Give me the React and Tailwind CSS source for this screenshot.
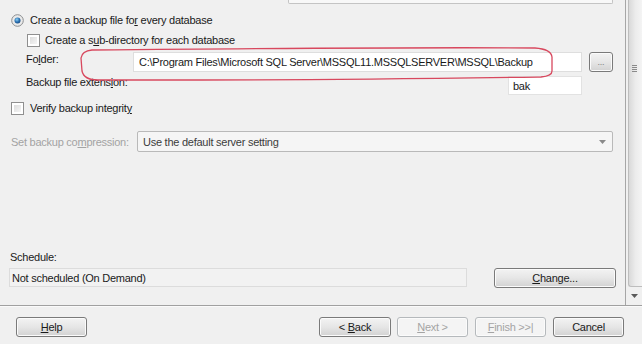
import React from 'react';

// Win7-style push button
function Button({ children, width = 'w-[71px]', disabled = false, className = '' }) {
  return (
    <div
      className={
        'h-[20px] flex items-center justify-center rounded-[3px] border shadow-[inset_0_0_0_1px_#fbfbfb] ' +
        width +
        ' ' +
        className +
        (disabled
          ? ' border-[#b5b9bc] bg-[#f4f4f4] text-[#a4a4a4]'
          : ' border-[#7a7a7a] bg-linear-to-b from-[#f3f3f3] via-[#e6e6e6] to-[#d2d2d2] text-[#1a1a1a]')
      }
    >
      {children}
    </div>
  );
}

function Checkbox() {
  return (
    <div className="w-[13px] h-[13px] shrink-0 border border-[#8f8f8f] bg-white p-[2px]">
      <div className="w-full h-full bg-linear-to-br from-[#dcdcdc] to-[#f6f6f6]" />
    </div>
  );
}

function Radio() {
  return (
    <svg width="13" height="13" viewBox="0 0 13 13" className="shrink-0">
      <defs>
        <radialGradient id="dot" cx="0.4" cy="0.35" r="0.7">
          <stop offset="0" stopColor="#8ad0f5" />
          <stop offset="0.6" stopColor="#2a6fb0" />
          <stop offset="1" stopColor="#1b4a80" />
        </radialGradient>
      </defs>
      <circle cx="6.5" cy="6.5" r="5.8" fill="#eaeaea" stroke="#8c8e90" strokeWidth="1" />
      <circle cx="6.5" cy="6.5" r="3" fill="url(#dot)" />
    </svg>
  );
}

export default function App() {
  return (
    <div className="relative w-[642px] h-[344px] overflow-hidden bg-[#f0f0f0] font-['Liberation_Sans',Arial,sans-serif] text-[11px] tracking-[-0.25px] leading-[14px] text-[#1a1a1a] flex flex-col">
      <div className="h-[305px] flex">
        {/* options panel */}
        <div className="w-[625px] flex flex-col">
          <div className="ml-[288px] w-[325px] h-[4px] border-x border-b border-[#c4c4c4] rounded-b-[2px] bg-[#f8f8f8]" />

          <div className="mt-[9px] h-[14px] pl-[11px] flex items-center gap-[6px]">
            <Radio />
            <span>
              Create a backup file fo<u>r</u> every database
            </span>
          </div>

          <div className="mt-[6px] h-[14px] pl-[27px] flex items-center gap-[5px]">
            <Checkbox />
            <span>
              Create a s<u>u</u>b-directory for each database
            </span>
          </div>

          <div className="mt-[5px] flex items-start">
            <span className="pl-[26px] w-[133px]">
              Fo<u>l</u>der:
            </span>
            <div className="w-[449px] h-[20px] border border-[#dedede] bg-white pl-[5px] flex items-center">
              C:\Program Files\Microsoft SQL Server\MSSQL11.MSSQLSERVER\MSSQL\Backup
            </div>
            <Button width="w-[24px]" className="ml-[7px] text-[#808080] text-[9px]">
              ...
            </Button>
          </div>

          <div className="mt-[3px] flex items-start">
            <span className="pl-[26px] w-[508px]">
              Backup file extens<u>i</u>on:
            </span>
            <div className="mt-[1px] w-[74px] h-[19px] border border-[#e2e2e2] bg-white pl-[4px] flex items-center">
              bak
            </div>
          </div>

          <div className="mt-[6px] h-[14px] pl-[11px] flex items-center gap-[6px]">
            <Checkbox />
            <span>
              Verify backup integrit<u>y</u>
            </span>
          </div>

          <div className="mt-[16px] flex items-center">
            <span className="pl-[11px] w-[137px] text-[#a3a3a3]">
              Set backup co<u>m</u>pression:
            </span>
            <div className="w-[476px] h-[21px] rounded-[2px] border border-[#b9b9b9] bg-[#f5f5f5] pl-[5px] pr-[6px] flex items-center justify-between text-[#3c3c3c]">
              <span>Use the default server setting</span>
              <svg width="7" height="4" viewBox="0 0 7 4">
                <path d="M0 0 L7 0 L3.5 4 Z" fill="#8a8a8a" />
              </svg>
            </div>
          </div>

          <div className="mt-[98px] h-[14px] pl-[10px]">Schedule:</div>

          <div className="mt-[4px] flex items-start">
            <div className="ml-[9px] w-[458px] h-[19px] border border-[#dcdcdc] bg-[#f2f2f2] pl-[2px] flex items-center">
              Not scheduled (On Demand)
            </div>
            <Button width="w-[122px]" className="ml-[27px]">
              <span>
                <u>C</u>hange...
              </span>
            </Button>
          </div>
        </div>

        {/* scrollbar */}
        <div className="w-[17px] border-l border-[#a6a6a6] flex flex-col">
          <div className="ml-[2px] h-[287px] rounded-bl-[3px] border-l border-b border-[#bdbdbd] bg-linear-to-r from-[#d9d9d9] via-[#ececec] to-[#f4f4f4] flex flex-col">
            <div className="mt-[65px] ml-[3px] w-[5px] flex flex-col gap-[1px]">
              <div className="h-[1px] bg-[#8a8a8a]" />
              <div className="h-[1px] bg-[#8a8a8a]" />
              <div className="h-[1px] bg-[#8a8a8a]" />
              <div className="h-[1px] bg-[#8a8a8a]" />
            </div>
          </div>
          <div className="flex-1 flex items-center pl-[5px]">
            <svg width="7" height="4" viewBox="0 0 7 4">
              <path d="M0 0 L7 0 L3.5 4 Z" fill="#5a5a5a" />
            </svg>
          </div>
        </div>
      </div>

      {/* wizard buttons */}
      <div className="flex-1 border-t border-[#a0a0a0] shadow-[inset_0_1px_0_#fafafa]">
        <div className="mt-[11px] flex items-center">
          <Button className="ml-[16px]">
            <span>
              <u>H</u>elp
            </span>
          </Button>
          <Button width="w-[72px]" className="ml-[232px]">
            <span>
              &lt; <u>B</u>ack
            </span>
          </Button>
          <Button disabled className="ml-[6px]">
            <span>
              <u>N</u>ext &gt;
            </span>
          </Button>
          <Button disabled className="ml-[7px]">
            <span>
              <u>F</u>inish &gt;&gt;|
            </span>
          </Button>
          <Button className="ml-[7px]">Cancel</Button>
        </div>
      </div>

      {/* hand-drawn red annotation */}
      <svg className="absolute left-0 top-0 pointer-events-none" width="642" height="344" viewBox="0 0 642 344">
        <path
          d="M92 50 C 200 49, 420 47, 535 48 Q 551 49 552 57 L 552 71 Q 552 76 541 77 C 470 78, 330 80, 200 80 L 98 80 Q 84 80 82 71 L 81 58 Q 82 51 92 50 Z"
          fill="none"
          stroke="#d8485e"
          strokeWidth="1.3"
        />
      </svg>
    </div>
  );
}
